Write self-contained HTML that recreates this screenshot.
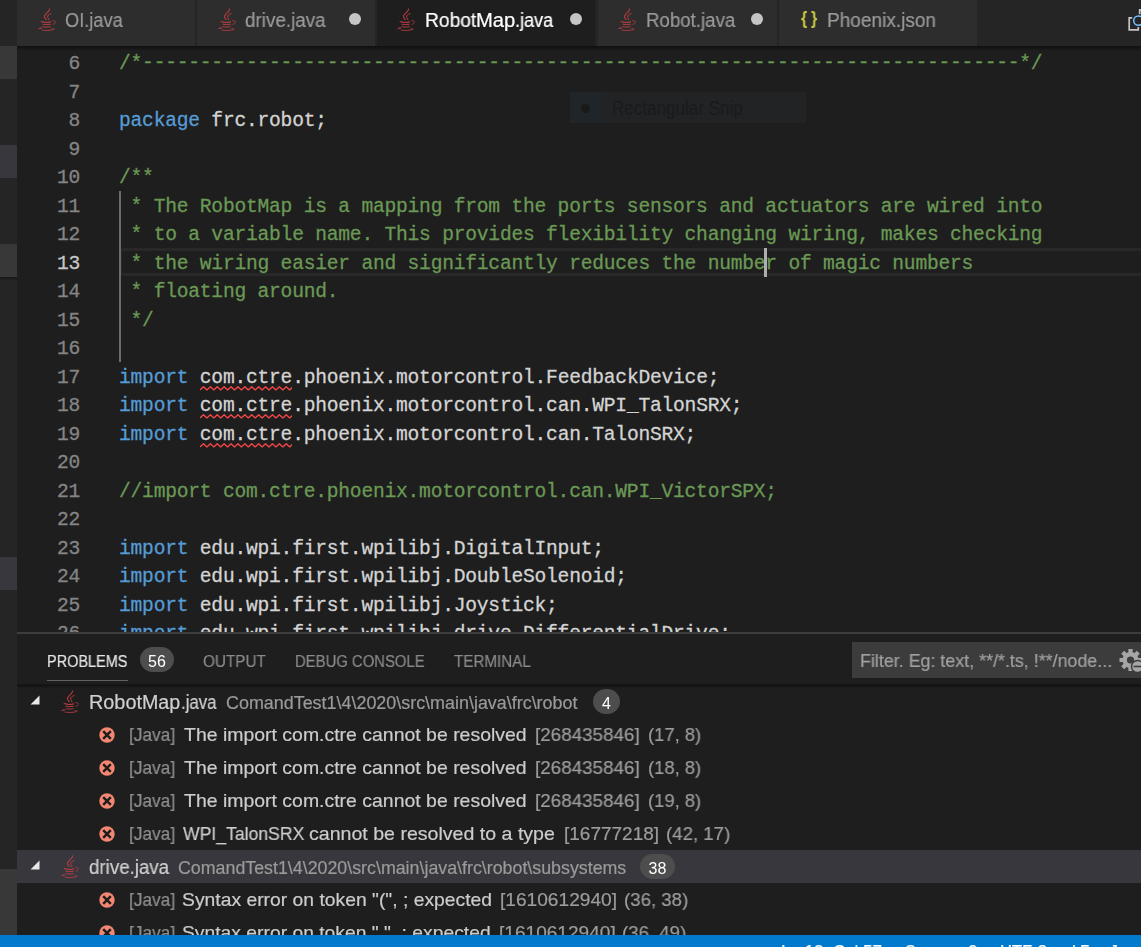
<!DOCTYPE html>
<html lang="en">
<head>
<meta charset="utf-8">
<title>RobotMap.java - Visual Studio Code</title>
<style>
html,body{margin:0;padding:0;}
body{width:1141px;height:947px;overflow:hidden;background:#1e1e1e;position:relative;
 font-family:"Liberation Sans",sans-serif;color:#ccc;}
.abs,.t,.ico,.ln,.cl,.num{position:absolute;}
.t{white-space:pre;transform-origin:0 50%;will-change:transform;-webkit-text-stroke:0.2px currentColor;}
.badge{will-change:transform;}
.side{left:0;top:0;width:17px;height:947px;background:#252526;}
.side i{position:absolute;left:0;width:17px;display:block;}
.tabs{left:17px;top:0;width:1124px;height:46px;background:#252526;}
.tab{position:absolute;top:0;height:46px;background:#2d2d2d;}
.tab.on{background:#1e1e1e;}
.dot{position:absolute;width:12px;height:12px;border-radius:50%;background:#c5c5c5;}
.editor{left:17px;top:46px;width:1124px;height:586px;overflow:hidden;background:#1e1e1e;}
.code{font-family:"Liberation Mono","DejaVu Sans Mono",monospace;font-size:19.6px;letter-spacing:-0.216px;line-height:28.5px;white-space:pre;-webkit-text-stroke:0.28px currentColor;}
.num{color:#858585;width:63px;text-align:right;left:0;}
.num.cur{color:#c6c6c6;}
.cl{left:102px;color:#d4d4d4;}
.c{color:#6a9955;}
.k{color:#569cd6;}
.d{color:#6a9955;position:relative;top:-1px;}
.panel{left:17px;top:632px;width:1124px;height:303px;background:#1e1e1e;overflow:hidden;}
.row{position:absolute;left:0;width:1124px;height:33px;}
.row.sel{background:#37373d;}
.badge{position:absolute;background:#4d4d4d;color:#fff;border-radius:13px;text-align:center;overflow:hidden;}
.status{left:0;top:935px;width:1141px;height:33px;background:#007acc;color:#fff;}
</style>
</head>
<body>

<div class="abs side">
<i style="top:46px;height:33px;background:#383838"></i>
<i style="top:145px;height:33px;background:#37373d"></i>
<i style="top:244px;height:33px;background:#383838"></i>
<i style="top:557px;height:33px;background:#37373d"></i>
<i style="top:869px;height:66px;background:#383838"></i>
<i style="top:277px;height:4px;background:linear-gradient(#00000055,#00000000)"></i>
</div>
<div class="abs tabs">
<div class="tab" style="left:0.0px;width:178.4px">
<svg class="ico" style="left:20.5px;top:8px" width="18" height="24" viewBox="0 0 18 24">
<g fill="none" stroke="#cc3e44" stroke-linecap="round" stroke-opacity=".85">
<path d="M11.5 .9c.8 2.400-4.700 4.500-5 7.400-.2 1.500 1.100 2.400 1.700 3.400" stroke-width="1.100"/>
<path d="M13 5.600c-2.200.7-3.600 1.900-3.400 3.300.2 1.200 1.200 1.800 1.400 2.900" stroke-width="1"/>
<path d="M3.100 13.600c2.800 1 7 .9 9.400.3" stroke-width="1.100"/>
<path d="M14.600 12.700c2-.5 3.300.7 2.600 2.100-.4.800-1.200 1.400-2.100 1.700" stroke-width=".8"/>
<path d="M5 16.300c2.400.4 5.100.4 7.300 0" stroke-width="1"/>
<path d="M5.100 18.700c2.200.5 4.900.5 7 0" stroke-width="1"/>
<path d="M1.100 20.600c.8-.5 1.700-.7 2.600-.7" stroke-width="1.100"/>
<path d="M4.200 22.100c3.300.7 8 .5 11.200-.5" stroke-width=".9"/>
<path d="M13.800 20.300c1.100.1 2.200.4 2.900.9" stroke-width=".6"/>
</g></svg>
<span class="t" style="left:47.68px;top:8.74px;font-size:19.5px;line-height:23px;color:#9a9a9a;transform:scaleX(0.9348);">OI.java</span>
</div>
<div class="tab" style="left:180.0px;width:178.2px">
<svg class="ico" style="left:20.5px;top:8px" width="18" height="24" viewBox="0 0 18 24">
<g fill="none" stroke="#cc3e44" stroke-linecap="round" stroke-opacity=".85">
<path d="M11.5 .9c.8 2.400-4.700 4.500-5 7.400-.2 1.500 1.100 2.400 1.700 3.400" stroke-width="1.100"/>
<path d="M13 5.600c-2.200.7-3.600 1.900-3.400 3.300.2 1.200 1.200 1.800 1.400 2.900" stroke-width="1"/>
<path d="M3.100 13.600c2.800 1 7 .9 9.400.3" stroke-width="1.100"/>
<path d="M14.600 12.700c2-.5 3.300.7 2.600 2.100-.4.800-1.200 1.400-2.100 1.700" stroke-width=".8"/>
<path d="M5 16.300c2.400.4 5.100.4 7.300 0" stroke-width="1"/>
<path d="M5.100 18.700c2.200.5 4.900.5 7 0" stroke-width="1"/>
<path d="M1.100 20.600c.8-.5 1.700-.7 2.600-.7" stroke-width="1.100"/>
<path d="M4.200 22.100c3.300.7 8 .5 11.200-.5" stroke-width=".9"/>
<path d="M13.800 20.300c1.100.1 2.200.4 2.900.9" stroke-width=".6"/>
</g></svg>
<span class="t" style="left:47.75px;top:8.74px;font-size:19.5px;line-height:23px;color:#9a9a9a;transform:scaleX(0.9668);">drive.java</span>
<span class="dot" style="left:152px;top:13px;background:#c5c5c5"></span>
</div>
<div class="tab on" style="left:360.2px;width:218.2px">
<svg class="ico" style="left:20.3px;top:8px" width="18" height="24" viewBox="0 0 18 24">
<g fill="none" stroke="#cc3e44" stroke-linecap="round" stroke-opacity=".85">
<path d="M11.5 .9c.8 2.400-4.700 4.500-5 7.400-.2 1.500 1.100 2.400 1.700 3.400" stroke-width="1.100"/>
<path d="M13 5.600c-2.200.7-3.600 1.900-3.400 3.300.2 1.200 1.200 1.800 1.400 2.900" stroke-width="1"/>
<path d="M3.100 13.600c2.800 1 7 .9 9.400.3" stroke-width="1.100"/>
<path d="M14.600 12.700c2-.5 3.300.7 2.600 2.100-.4.800-1.200 1.400-2.100 1.700" stroke-width=".8"/>
<path d="M5 16.300c2.400.4 5.100.4 7.300 0" stroke-width="1"/>
<path d="M5.100 18.700c2.200.5 4.900.5 7 0" stroke-width="1"/>
<path d="M1.100 20.600c.8-.5 1.700-.7 2.600-.7" stroke-width="1.100"/>
<path d="M4.200 22.100c3.300.7 8 .5 11.200-.5" stroke-width=".9"/>
<path d="M13.800 20.300c1.100.1 2.200.4 2.900.9" stroke-width=".6"/>
</g></svg>
<span class="t" style="left:47.96px;top:8.74px;font-size:19.5px;line-height:23px;color:#fff;transform:scaleX(0.9857);">Robot</span><span class="t" style="left:99.08px;top:8.74px;font-size:19.5px;line-height:23px;color:#fff;transform:scaleX(1.0374);">Map</span><span class="t" style="left:138.17px;top:8.74px;font-size:19.5px;line-height:23px;color:#fff;transform:scaleX(0.9289);">.java</span>
<span class="dot" style="left:192.8px;top:13px;"></span>
</div>
<div class="tab" style="left:580.9px;width:179.3px">
<svg class="ico" style="left:20.1px;top:8px" width="18" height="24" viewBox="0 0 18 24">
<g fill="none" stroke="#cc3e44" stroke-linecap="round" stroke-opacity=".85">
<path d="M11.5 .9c.8 2.400-4.700 4.500-5 7.400-.2 1.500 1.100 2.400 1.700 3.400" stroke-width="1.100"/>
<path d="M13 5.600c-2.200.7-3.600 1.900-3.400 3.300.2 1.200 1.200 1.800 1.400 2.900" stroke-width="1"/>
<path d="M3.100 13.600c2.800 1 7 .9 9.400.3" stroke-width="1.100"/>
<path d="M14.600 12.700c2-.5 3.300.7 2.600 2.100-.4.800-1.200 1.400-2.100 1.700" stroke-width=".8"/>
<path d="M5 16.300c2.400.4 5.100.4 7.300 0" stroke-width="1"/>
<path d="M5.100 18.700c2.200.5 4.900.5 7 0" stroke-width="1"/>
<path d="M1.100 20.600c.8-.5 1.700-.7 2.600-.7" stroke-width="1.100"/>
<path d="M4.200 22.100c3.300.7 8 .5 11.200-.5" stroke-width=".9"/>
<path d="M13.800 20.300c1.100.1 2.200.4 2.900.9" stroke-width=".6"/>
</g></svg>
<span class="t" style="left:48.51px;top:8.74px;font-size:19.5px;line-height:23px;color:#9a9a9a;transform:scaleX(0.9571);">Robot.java</span>
<span class="dot" style="left:153.10000000000002px;top:13px;background:#c5c5c5"></span>
</div>
<div class="tab" style="left:762.3px;width:197.9px">
<span class="t" style="left:21.66px;top:6.79px;font-size:18.5px;line-height:22px;color:#cbcb41;transform:scaleX(0.8679);-webkit-text-stroke:0;font-weight:bold;">{</span>
<span class="t" style="left:31.88px;top:6.79px;font-size:18.5px;line-height:22px;color:#cbcb41;transform:scaleX(0.8679);-webkit-text-stroke:0;font-weight:bold;">}</span>
<span class="t" style="left:47.88px;top:8.74px;font-size:19.5px;line-height:23px;color:#9a9a9a;transform:scaleX(0.9761);">Phoenix.json</span>
</div>
<svg class="ico" style="left:1103px;top:0" width="21" height="40" viewBox="1120 0 21 40">
<path d="M1132.200 17.800H1129.200V29.800H1138.300V27" fill="none" stroke="#c5c5c5" stroke-width="1.700"/>
<path d="M1139.700 14.300V9.900H1141" fill="none" stroke="#c5c5c5" stroke-width="1.700"/>
<circle cx="1138.400" cy="20.600" r="4.700" fill="#252526" stroke="#75beff" stroke-width="1.500"/>
</svg>
</div>
<div class="abs editor code">
<div class="abs" style="left:553px;top:46px;width:236px;height:31px;background:#212325;font-family:'Liberation Sans',sans-serif;-webkit-text-stroke:0;letter-spacing:0"><div class="abs" style="left:0;top:0;width:31px;height:31px;background:#1f2528"></div><div class="abs" style="left:11.2px;top:11.500px;width:9px;height:9px;border-radius:50%;background:#1a1a1b"></div><span class="t" style="left:41.84px;top:4.74px;font-size:19.5px;line-height:23px;color:#1b1b1c;transform:scaleX(0.8748);-webkit-text-stroke:0;">Rectangular Snip</span></div>
<div class="abs" style="left:104px;top:201.5px;width:1020px;height:22.5px;border:3px solid #282828;border-left-width:1px;border-right:0"></div>
<div class="abs" style="left:102.2px;top:145.0px;width:1.7px;height:171.0px;background:#6c6c6c"></div>
<div class="num" style="top:4.40px">6</div>
<div class="cl" style="top:4.40px"><span class="c">/*</span><span class="d">----------------------------------------------------------------------------</span><span class="c">*/</span></div>
<div class="num" style="top:32.90px">7</div>
<div class="num" style="top:61.40px">8</div>
<div class="cl" style="top:61.40px"><span class="k">package</span> frc.robot;</div>
<div class="num" style="top:89.90px">9</div>
<div class="num" style="top:118.40px">10</div>
<div class="cl" style="top:118.40px"><span class="c">/**</span></div>
<div class="num" style="top:146.90px">11</div>
<div class="cl" style="top:146.90px"><span class="c"> * The RobotMap is a mapping from the ports sensors and actuators are wired into</span></div>
<div class="num" style="top:175.40px">12</div>
<div class="cl" style="top:175.40px"><span class="c"> * to a variable name. This provides flexibility changing wiring, makes checking</span></div>
<div class="num cur" style="top:203.90px">13</div>
<div class="cl" style="top:203.90px"><span class="c"> * the wiring easier and significantly reduces the number of magic numbers</span></div>
<div class="num" style="top:232.40px">14</div>
<div class="cl" style="top:232.40px"><span class="c"> * floating around.</span></div>
<div class="num" style="top:260.90px">15</div>
<div class="cl" style="top:260.90px"><span class="c"> */</span></div>
<div class="num" style="top:289.40px">16</div>
<div class="num" style="top:317.90px">17</div>
<div class="cl" style="top:317.90px"><span class="k">import</span> <span class="sq">com.ctre</span>.phoenix.motorcontrol.FeedbackDevice;</div>
<svg class="ico" style="left:182.8px;top:339.5px" width="92.4" height="5" viewBox="0 0 92.4 5"><path d="M0 3.9L3.45 0.7L6.90 3.9L10.35 0.7L13.80 3.9L17.25 0.7L20.70 3.9L24.15 0.7L27.60 3.9L31.05 0.7L34.50 3.9L37.95 0.7L41.40 3.9L44.85 0.7L48.30 3.9L51.75 0.7L55.20 3.9L58.65 0.7L62.10 3.9L65.55 0.7L69.00 3.9L72.45 0.7L75.90 3.9L79.35 0.7L82.80 3.9L86.25 0.7L89.70 3.9L93.15 0.7" fill="none" stroke="#f44747" stroke-width="1.350" stroke-linejoin="round"/></svg>
<div class="num" style="top:346.40px">18</div>
<div class="cl" style="top:346.40px"><span class="k">import</span> <span class="sq">com.ctre</span>.phoenix.motorcontrol.can.WPI_TalonSRX;</div>
<svg class="ico" style="left:182.8px;top:368.0px" width="92.4" height="5" viewBox="0 0 92.4 5"><path d="M0 3.9L3.45 0.7L6.90 3.9L10.35 0.7L13.80 3.9L17.25 0.7L20.70 3.9L24.15 0.7L27.60 3.9L31.05 0.7L34.50 3.9L37.95 0.7L41.40 3.9L44.85 0.7L48.30 3.9L51.75 0.7L55.20 3.9L58.65 0.7L62.10 3.9L65.55 0.7L69.00 3.9L72.45 0.7L75.90 3.9L79.35 0.7L82.80 3.9L86.25 0.7L89.70 3.9L93.15 0.7" fill="none" stroke="#f44747" stroke-width="1.350" stroke-linejoin="round"/></svg>
<div class="num" style="top:374.90px">19</div>
<div class="cl" style="top:374.90px"><span class="k">import</span> <span class="sq">com.ctre</span>.phoenix.motorcontrol.can.TalonSRX;</div>
<svg class="ico" style="left:182.8px;top:396.5px" width="92.4" height="5" viewBox="0 0 92.4 5"><path d="M0 3.9L3.45 0.7L6.90 3.9L10.35 0.7L13.80 3.9L17.25 0.7L20.70 3.9L24.15 0.7L27.60 3.9L31.05 0.7L34.50 3.9L37.95 0.7L41.40 3.9L44.85 0.7L48.30 3.9L51.75 0.7L55.20 3.9L58.65 0.7L62.10 3.9L65.55 0.7L69.00 3.9L72.45 0.7L75.90 3.9L79.35 0.7L82.80 3.9L86.25 0.7L89.70 3.9L93.15 0.7" fill="none" stroke="#f44747" stroke-width="1.350" stroke-linejoin="round"/></svg>
<div class="num" style="top:403.40px">20</div>
<div class="num" style="top:431.90px">21</div>
<div class="cl" style="top:431.90px"><span class="c">//import com.ctre.phoenix.motorcontrol.can.WPI_VictorSPX;</span></div>
<div class="num" style="top:460.40px">22</div>
<div class="num" style="top:488.90px">23</div>
<div class="cl" style="top:488.90px"><span class="k">import</span> edu.wpi.first.wpilibj.DigitalInput;</div>
<div class="num" style="top:517.40px">24</div>
<div class="cl" style="top:517.40px"><span class="k">import</span> edu.wpi.first.wpilibj.DoubleSolenoid;</div>
<div class="num" style="top:545.90px">25</div>
<div class="cl" style="top:545.90px"><span class="k">import</span> edu.wpi.first.wpilibj.Joystick;</div>
<div class="num" style="top:574.40px">26</div>
<div class="cl" style="top:574.40px"><span class="k">import</span> edu.wpi.first.wpilibj.drive.DifferentialDrive;</div>
<div class="abs" style="left:747px;top:201.5px;width:3px;height:29px;background:#aeafad"></div>
<div class="abs" style="left:0;top:0;width:1124px;height:5px;background:linear-gradient(#00000080,#00000000)"></div>
</div>
<div class="abs panel">
<div class="abs" style="left:0;top:0;width:1124px;height:2px;background:#3d3d3d"></div>
<span class="t" style="left:30.04px;top:19.96px;font-size:16px;line-height:19px;color:#e7e7e7;transform:scaleX(0.9038);">PROBLEMS</span>
<div class="abs" style="left:30px;top:48px;width:81px;height:1px;background:#626262"></div>
<div class="badge" style="left:123px;top:15px;width:34px;height:25px;font-size:16px;line-height:30px">56</div>
<span class="t" style="left:186.06px;top:19.96px;font-size:16px;line-height:19px;color:#8b8b8b;transform:scaleX(0.9541);">OUTPUT</span>
<span class="t" style="left:278.01px;top:19.96px;font-size:16px;line-height:19px;color:#8b8b8b;transform:scaleX(0.9285);">DEBUG CONSOLE</span>
<span class="t" style="left:437.00px;top:19.96px;font-size:16px;line-height:19px;color:#8b8b8b;transform:scaleX(0.9491);">TERMINAL</span>
<div class="abs" style="left:835px;top:10px;width:300px;height:36px;background:#3c3c3c"></div>
<span class="t" style="left:842.77px;top:17.52px;font-size:18.7px;line-height:22px;color:#a0a0a0;transform:scaleX(0.9557);">Filter. Eg: text, **/*.ts, !**/node...</span>
<svg class="ico" style="left:1101.8px;top:16.3px" width="26" height="26" viewBox="0 0 26 26">
<g fill="#a6a6a6"><circle cx="11.5" cy="12" r="8"/>
<g stroke="#a6a6a6" stroke-width="4.200"><path d="M11.500 1v22M.5 12h22M3.700 4.200l15.600 15.600M19.300 4.200L3.700 19.800"/></g></g>
<circle cx="11.500" cy="12" r="3.600" fill="#3c3c3c"/>
<circle cx="18.500" cy="18.500" r="6" fill="#a6a6a6" stroke="#3c3c3c" stroke-width="1.500"/>
<path d="M14.600 18.500h8" stroke="#3c3c3c" stroke-width="1.600"/>
</svg>
<div class="abs" style="left:0;top:53px;width:1124px;height:300px;overflow:hidden">
<div class="row" style="top:0px">
<svg class="ico" style="left:12.7px;top:10.3px" width="10" height="10" viewBox="0 0 10 10"><path d="M9.500 0.500v9h-9z" fill="#e8e8e8"/></svg>
<svg class="ico" style="left:43.9px;top:4.8px" width="18" height="24" viewBox="0 0 18 24">
<g fill="none" stroke="#cc3e44" stroke-linecap="round" stroke-opacity=".85">
<path d="M11.5 .9c.8 2.400-4.700 4.500-5 7.400-.2 1.500 1.100 2.400 1.700 3.400" stroke-width="1.100"/>
<path d="M13 5.600c-2.200.7-3.600 1.900-3.400 3.300.2 1.200 1.200 1.800 1.400 2.900" stroke-width="1"/>
<path d="M3.100 13.600c2.800 1 7 .9 9.400.3" stroke-width="1.100"/>
<path d="M14.600 12.700c2-.5 3.300.7 2.600 2.100-.4.800-1.200 1.400-2.100 1.700" stroke-width=".8"/>
<path d="M5 16.300c2.400.4 5.100.4 7.300 0" stroke-width="1"/>
<path d="M5.100 18.700c2.200.5 4.900.5 7 0" stroke-width="1"/>
<path d="M1.100 20.600c.8-.5 1.700-.7 2.600-.7" stroke-width="1.100"/>
<path d="M4.200 22.100c3.300.7 8 .5 11.200-.5" stroke-width=".9"/>
<path d="M13.800 20.300c1.100.1 2.200.4 2.900.9" stroke-width=".6"/>
</g></svg>
<span class="t" style="left:71.61px;top:6.34px;font-size:19.5px;line-height:23px;color:#d0d0d0;transform:scaleX(1.0175);">Robot</span><span class="t" style="left:124.73px;top:6.34px;font-size:19.5px;line-height:23px;color:#d0d0d0;transform:scaleX(1.0064);">Map</span><span class="t" style="left:164.39px;top:6.34px;font-size:19.5px;line-height:23px;color:#d0d0d0;transform:scaleX(0.8631);">.java</span>
<span class="t" style="left:209.10px;top:8.04px;font-size:17.5px;line-height:21px;color:#9a9a9a;transform:scaleX(1.0235);">ComandTest1\4\2020\src\main\java\frc\robot</span>
<div class="badge" style="left:576px;top:4px;width:27px;height:25px;font-size:16px;line-height:29.5px">4</div>
</div>
<div class="row" style="top:33px">
<svg class="ico" style="left:82.3px;top:9px" width="16" height="16" viewBox="0 0 16 16">
<circle cx="8" cy="8" r="7.7" fill="#f48771"/>
<path d="M4.200 4.200l7.600 7.600M11.800 4.200l-7.600 7.600" stroke="#1e1e1e" stroke-width="2.500" fill="none"/></svg>
<span class="t" style="left:111.69px;top:4.52px;font-size:19px;line-height:23px;color:#8f8f8f;transform:scaleX(0.9111);">[Java]</span>
<span class="t" style="left:166.61px;top:4.52px;font-size:19px;line-height:23px;color:#cccccc;transform:scaleX(1.0235);">The import com.ctre cannot be resolved</span>
<span class="t" style="left:517.88px;top:4.52px;font-size:19px;line-height:23px;color:#9d9d9d;transform:scaleX(0.9909);">[268435846]</span>
<span class="t" style="left:630.65px;top:4.52px;font-size:19px;line-height:23px;color:#9d9d9d;transform:scaleX(0.9683);">(17, 8)</span>
</div>
<div class="row" style="top:66px">
<svg class="ico" style="left:82.3px;top:9px" width="16" height="16" viewBox="0 0 16 16">
<circle cx="8" cy="8" r="7.7" fill="#f48771"/>
<path d="M4.200 4.200l7.600 7.600M11.800 4.200l-7.600 7.600" stroke="#1e1e1e" stroke-width="2.500" fill="none"/></svg>
<span class="t" style="left:111.69px;top:4.52px;font-size:19px;line-height:23px;color:#8f8f8f;transform:scaleX(0.9111);">[Java]</span>
<span class="t" style="left:166.61px;top:4.52px;font-size:19px;line-height:23px;color:#cccccc;transform:scaleX(1.0235);">The import com.ctre cannot be resolved</span>
<span class="t" style="left:517.88px;top:4.52px;font-size:19px;line-height:23px;color:#9d9d9d;transform:scaleX(0.9909);">[268435846]</span>
<span class="t" style="left:630.65px;top:4.52px;font-size:19px;line-height:23px;color:#9d9d9d;transform:scaleX(0.9683);">(18, 8)</span>
</div>
<div class="row" style="top:99px">
<svg class="ico" style="left:82.3px;top:9px" width="16" height="16" viewBox="0 0 16 16">
<circle cx="8" cy="8" r="7.7" fill="#f48771"/>
<path d="M4.200 4.200l7.600 7.600M11.800 4.200l-7.600 7.600" stroke="#1e1e1e" stroke-width="2.500" fill="none"/></svg>
<span class="t" style="left:111.69px;top:4.52px;font-size:19px;line-height:23px;color:#8f8f8f;transform:scaleX(0.9111);">[Java]</span>
<span class="t" style="left:166.61px;top:4.52px;font-size:19px;line-height:23px;color:#cccccc;transform:scaleX(1.0235);">The import com.ctre cannot be resolved</span>
<span class="t" style="left:517.88px;top:4.52px;font-size:19px;line-height:23px;color:#9d9d9d;transform:scaleX(0.9909);">[268435846]</span>
<span class="t" style="left:630.65px;top:4.52px;font-size:19px;line-height:23px;color:#9d9d9d;transform:scaleX(0.9683);">(19, 8)</span>
</div>
<div class="row" style="top:132px">
<svg class="ico" style="left:82.3px;top:9px" width="16" height="16" viewBox="0 0 16 16">
<circle cx="8" cy="8" r="7.7" fill="#f48771"/>
<path d="M4.200 4.200l7.600 7.600M11.800 4.200l-7.600 7.600" stroke="#1e1e1e" stroke-width="2.500" fill="none"/></svg>
<span class="t" style="left:111.69px;top:4.52px;font-size:19px;line-height:23px;color:#8f8f8f;transform:scaleX(0.9111);">[Java]</span>
<span class="t" style="left:166.25px;top:4.52px;font-size:19px;line-height:23px;color:#cccccc;transform:scaleX(0.9268);">WPI_TalonSRX</span>
<span class="t" style="left:292.22px;top:4.52px;font-size:19px;line-height:23px;color:#cccccc;transform:scaleX(1.0300);">cannot be resolved to a type</span>
<span class="t" style="left:546.62px;top:4.52px;font-size:19px;line-height:23px;color:#9d9d9d;transform:scaleX(0.9987);">[16777218]</span>
<span class="t" style="left:648.88px;top:4.52px;font-size:19px;line-height:23px;color:#9d9d9d;transform:scaleX(0.9804);">(42, 17)</span>
</div>
<div class="row sel" style="top:165px">
<svg class="ico" style="left:12.7px;top:10.3px" width="10" height="10" viewBox="0 0 10 10"><path d="M9.500 0.500v9h-9z" fill="#e8e8e8"/></svg>
<svg class="ico" style="left:43.9px;top:4.8px" width="18" height="24" viewBox="0 0 18 24">
<g fill="none" stroke="#cc3e44" stroke-linecap="round" stroke-opacity=".85">
<path d="M11.5 .9c.8 2.400-4.700 4.500-5 7.400-.2 1.500 1.100 2.400 1.700 3.400" stroke-width="1.100"/>
<path d="M13 5.600c-2.200.7-3.600 1.900-3.400 3.300.2 1.200 1.200 1.800 1.400 2.900" stroke-width="1"/>
<path d="M3.100 13.600c2.800 1 7 .9 9.400.3" stroke-width="1.100"/>
<path d="M14.600 12.700c2-.5 3.300.7 2.600 2.100-.4.800-1.200 1.400-2.100 1.700" stroke-width=".8"/>
<path d="M5 16.300c2.400.4 5.100.4 7.300 0" stroke-width="1"/>
<path d="M5.100 18.700c2.200.5 4.900.5 7 0" stroke-width="1"/>
<path d="M1.100 20.600c.8-.5 1.700-.7 2.600-.7" stroke-width="1.100"/>
<path d="M4.200 22.100c3.300.7 8 .5 11.200-.5" stroke-width=".9"/>
<path d="M13.800 20.300c1.100.1 2.200.4 2.900.9" stroke-width=".6"/>
</g></svg>
<span class="t" style="left:71.75px;top:6.34px;font-size:19.5px;line-height:23px;color:#d0d0d0;transform:scaleX(0.9607);">drive.java</span>
<span class="t" style="left:160.86px;top:8.04px;font-size:17.5px;line-height:21px;color:#9a9a9a;transform:scaleX(1.0174);">ComandTest1\4\2020\src\main\java\frc\robot\subsystems</span>
<div class="badge" style="left:623px;top:4px;width:35px;height:25px;font-size:16px;line-height:29.5px">38</div>
</div>
<div class="row" style="top:198px">
<svg class="ico" style="left:82.3px;top:9px" width="16" height="16" viewBox="0 0 16 16">
<circle cx="8" cy="8" r="7.7" fill="#f48771"/>
<path d="M4.200 4.200l7.600 7.600M11.800 4.200l-7.600 7.600" stroke="#1e1e1e" stroke-width="2.500" fill="none"/></svg>
<span class="t" style="left:111.69px;top:4.52px;font-size:19px;line-height:23px;color:#8f8f8f;transform:scaleX(0.9111);">[Java]</span>
<span class="t" style="left:165.38px;top:4.52px;font-size:19px;line-height:23px;color:#cccccc;transform:scaleX(1.0168);">Syntax error on token "(", ; expected</span>
<span class="t" style="left:483.11px;top:4.52px;font-size:19px;line-height:23px;color:#9d9d9d;transform:scaleX(1.0065);">[1610612940]</span>
<span class="t" style="left:606.88px;top:4.52px;font-size:19px;line-height:23px;color:#9d9d9d;transform:scaleX(0.9804);">(36, 38)</span>
</div>
<div class="row" style="top:231px">
<svg class="ico" style="left:82.3px;top:9px" width="16" height="16" viewBox="0 0 16 16">
<circle cx="8" cy="8" r="7.7" fill="#f48771"/>
<path d="M4.200 4.200l7.600 7.600M11.800 4.200l-7.600 7.600" stroke="#1e1e1e" stroke-width="2.500" fill="none"/></svg>
<span class="t" style="left:111.69px;top:4.52px;font-size:19px;line-height:23px;color:#8f8f8f;transform:scaleX(0.9111);">[Java]</span>
<span class="t" style="left:165.38px;top:4.52px;font-size:19px;line-height:23px;color:#cccccc;transform:scaleX(1.0154);">Syntax error on token ",", ; expected</span>
<span class="t" style="left:481.86px;top:4.52px;font-size:19px;line-height:23px;color:#9d9d9d;transform:scaleX(1.0043);">[1610612940]</span>
<span class="t" style="left:604.88px;top:4.52px;font-size:19px;line-height:23px;color:#9d9d9d;transform:scaleX(0.9804);">(36, 49)</span>
</div>
</div>
<div class="abs" style="left:0;top:51px;width:1124px;height:5px;background:linear-gradient(#00000000,#00000066 50%,#00000000)"></div>
</div>
<div class="abs status">
<span class="t" style="left:781.34px;top:6.06px;font-size:18px;line-height:22px;color:#fff;transform:scaleX(0.9427);">Ln 13, Col 57</span>
<span class="t" style="left:905.47px;top:6.06px;font-size:18px;line-height:22px;color:#fff;transform:scaleX(0.9029);">Spaces: 2</span>
<span class="t" style="left:1000.26px;top:6.06px;font-size:18px;line-height:22px;color:#fff;transform:scaleX(0.9202);">UTF-8</span>
<span class="t" style="left:1071.82px;top:6.06px;font-size:18px;line-height:22px;color:#fff;transform:scaleX(0.8192);">LF</span>
<span class="t" style="left:1109.76px;top:6.06px;font-size:18px;line-height:22px;color:#fff;transform:scaleX(0.8725);">Java</span>
</div>
</body>
</html>
